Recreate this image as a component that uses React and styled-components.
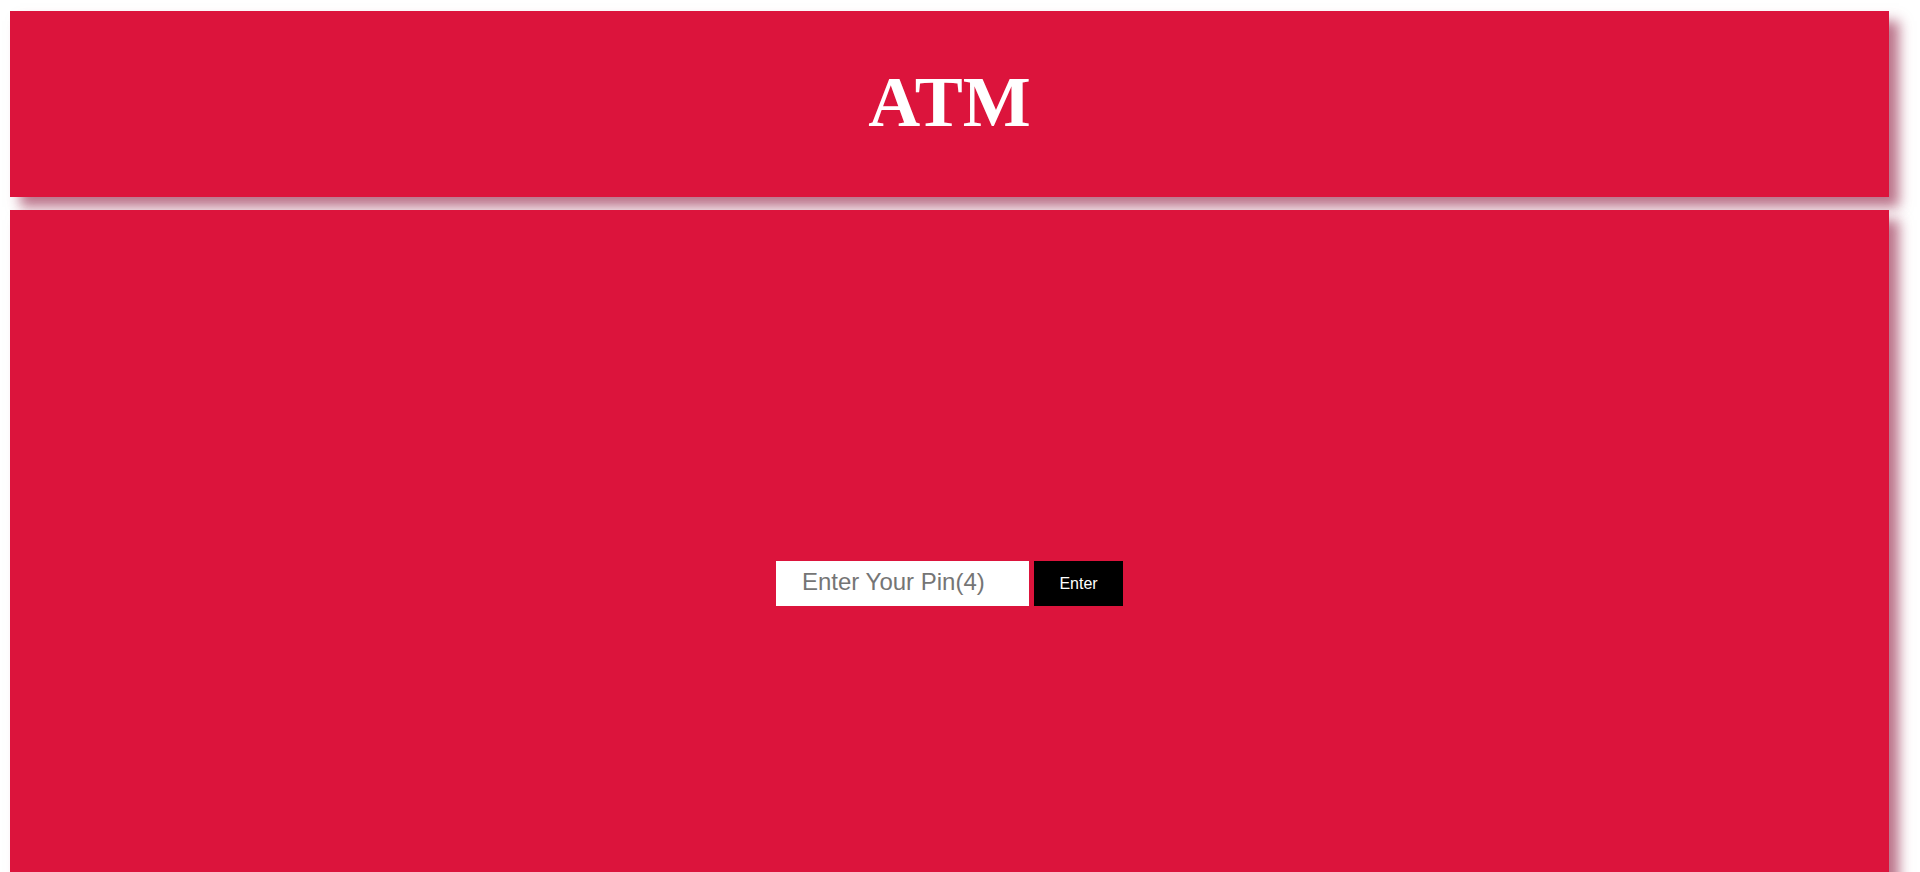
import React from "react";
import styled, { createGlobalStyle } from "styled-components";

const GlobalStyle = createGlobalStyle`
  html, body {
    margin: 0;
    padding: 0;
  }
  body {
    padding: 11px 0 0 10px;
    background: #fff;
    font-family: "Liberation Serif", "Times New Roman", serif;
  }
`;

const Page = styled.div`
  width: 1879px;
  display: flex;
  flex-direction: column;
  gap: 13px;
`;

const Card = styled.section`
  background: #dc143c;
  box-shadow: 10px 10px 12px rgba(150, 40, 75, 0.65);
`;

const Header = styled(Card)`
  height: 186px;
  display: flex;
  align-items: center;
  justify-content: center;
`;

const Title = styled.h1`
  margin: 0 0 3px;
  color: #fff;
  font-family: "Liberation Serif", "Times New Roman", serif;
  font-size: 72px;
  font-weight: bold;
`;

const Screen = styled(Card)`
  height: 686px;
  padding-top: 351px;
  box-sizing: border-box;
  display: flex;
  justify-content: center;
  align-items: flex-start;
`;

const PinForm = styled.form`
  display: flex;
  gap: 5px;
`;

const PinInput = styled.input`
  width: 253px;
  height: 45px;
  box-sizing: border-box;
  border: none;
  outline: none;
  padding: 0 26px 4px;
  font-family: "Liberation Sans", Arial, sans-serif;
  font-size: 24px;
  color: #222;
  background: #fff;

  &::placeholder {
    color: #757575;
  }
`;

const EnterButton = styled.button`
  width: 89px;
  height: 45px;
  border: none;
  background: #000;
  color: #fff;
  font-family: "Liberation Sans", Arial, sans-serif;
  font-size: 16px;
  cursor: pointer;
`;

export default function App() {
  return (
    <>
      <GlobalStyle />
      <Page>
        <Header>
          <Title>ATM</Title>
        </Header>
        <Screen>
          <PinForm onSubmit={(e) => e.preventDefault()}>
            <PinInput type="password" placeholder="Enter Your Pin(4)" maxLength={4} />
            <EnterButton type="submit">Enter</EnterButton>
          </PinForm>
        </Screen>
      </Page>
    </>
  );
}
